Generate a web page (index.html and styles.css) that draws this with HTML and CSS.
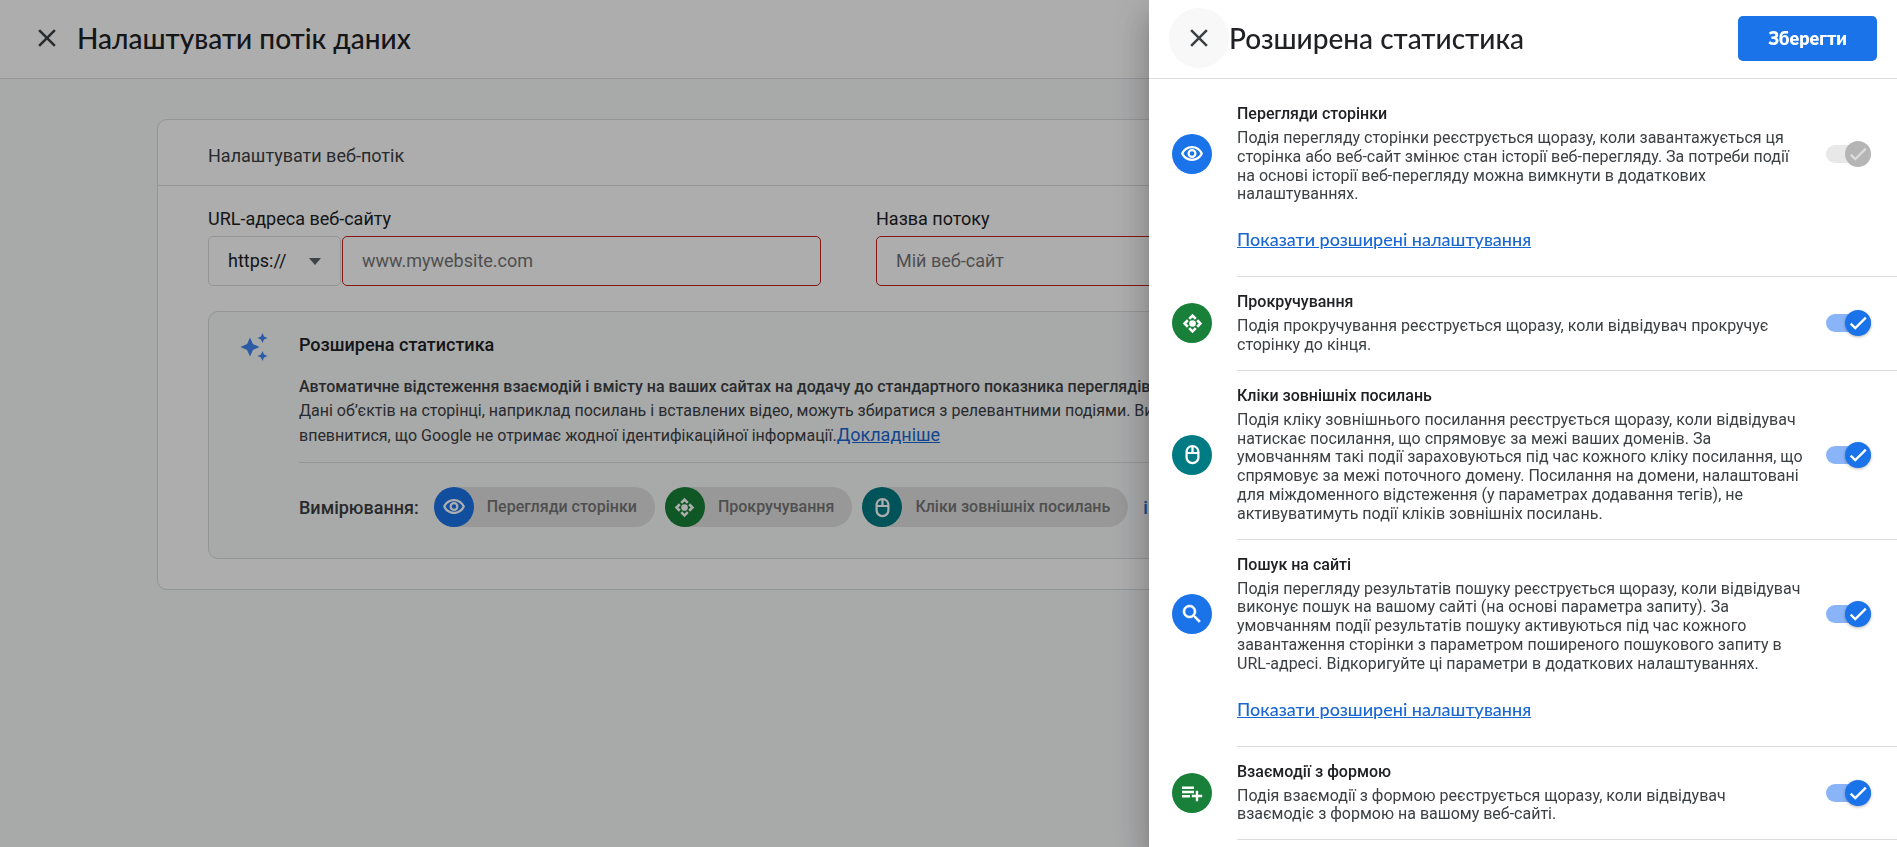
FILE: index.html
```html
<!DOCTYPE html>
<html lang="uk">
<head>
<meta charset="utf-8">
<meta name="viewport" content="width=device-width, initial-scale=1">
<title>Налаштувати потік даних</title>
<link rel="stylesheet" href="styles.css">
</head>
<body>
<svg class="sprite" aria-hidden="true">
  <symbol id="i-close" viewBox="0 0 24 24"><path d="M19 6.41 17.59 5 12 10.59 6.41 5 5 6.41 10.59 12 5 17.59 6.41 19 12 13.41 17.59 19 19 17.59 13.41 12z"/></symbol>
  <symbol id="i-eye" viewBox="0 0 24 24"><path d="M12 6.300c3.600 0 6.900 2 8.500 5.200-1.600 3.200-4.900 5.200-8.500 5.200s-6.900-2-8.500-5.200C5.100 8.300 8.400 6.300 12 6.300M12 4C7 4 2.730 7.110 1 11.500 2.730 15.890 7 19 12 19s9.270-3.110 11-7.500C21.270 7.110 17 4 12 4zm0 5.200a2.300 2.300 0 1 1 0 4.600 2.300 2.300 0 0 1 0-4.600M12 7a4.500 4.500 0 1 0 0 9 4.500 4.500 0 0 0 0-9z"/></symbol>
  <symbol id="i-scroll" viewBox="0 0 24 24"><path d="M12 .8 7.200 5.600l2.100 2.100L12 5l2.700 2.700 2.100-2.100zM12 23.200l4.800-4.800-2.100-2.100L12 19l-2.700-2.700-2.100 2.100zM.8 12l4.800 4.800 2.100-2.100L5 12l2.700-2.700-2.100-2.100zM23.200 12l-4.800-4.800-2.100 2.100L19 12l-2.700 2.700 2.100 2.100z"/><circle cx="12" cy="12" r="3.800"/></symbol>
  <symbol id="i-mouse" viewBox="0 0 24 24"><path d="M20 9c-.04-4.390-3.600-7.930-8-7.930S4.040 4.610 4 9v6c0 4.420 3.580 8 8 8s8-3.580 8-8V9zm-2.500 0h-4.200V3.600c2.400.5 4.160 2.600 4.200 5.400zm-6.800-5.400V9H6.500c.04-2.800 1.800-4.900 4.200-5.400zM17.500 15a5.500 5.500 0 0 1-11 0v-3.600h11z"/></symbol>
  <symbol id="i-search" viewBox="0 0 24 24"><path d="M15.500 14h-.79l-.28-.27C15.410 12.590 16 11.110 16 9.500 16 5.910 13.090 3 9.500 3S3 5.910 3 9.500 5.910 16 9.500 16c1.610 0 3.090-.59 4.230-1.570l.27.28v.79l5 4.990L20.490 19l-4.990-5zm-6 0C7.010 14 5 11.990 5 9.500S7.010 5 9.500 5 14 7.010 14 9.500 11.990 14 9.500 14z" stroke="currentColor" stroke-width=".5"/></symbol>
  <symbol id="i-form" viewBox="0 0 24 24"><path d="M14 9.800H2v2.400h12V9.800zm0-4.200H2V8h12V5.600zm4.200 8.200V9.800h-2.400v4h-4v2.400h4v4h2.400v-4h4v-2.400h-4zM2 16.400h8V14H2v2.400z"/></symbol>
  <symbol id="i-check" viewBox="0 0 24 24"><path d="M9 15.800 4.930 11.700l-1.800 1.800L9 19.400 21.400 7l-1.800-1.800z"/></symbol>
  <symbol id="i-spark" viewBox="0 0 28 28"><path d="M10 4.500l2.900 6.600 6.600 2.900-6.600 2.900L10 23.500l-2.900-6.600L.5 14l6.600-2.900z"/><path d="M22.500 0l1.500 3.500L27.500 5 24 6.500 22.500 10 21 6.500 17.500 5 21 3.500z"/><path d="M22.500 18l1.500 3.500 3.500 1.500-3.500 1.500-1.500 3.500-1.500-3.500-3.500-1.500 3.500-1.500z"/></symbol>
</svg>

<div class="page">
  <header class="topbar">
    <button class="close" type="button" aria-label="Закрити"><svg class="close-icon"><use href="#i-close"/></svg></button>
    <h1 class="heading">Налаштувати потік даних</h1>
  </header>
  <main class="content">
    <section class="card">
      <h2 class="card-title">Налаштувати веб-потік</h2>
      <div class="card-body">
        <div class="fields">
          <div class="field">
            <label class="field-label" for="url">URL-адреса веб-сайту</label>
            <div class="url-row">
              <div class="scheme">
                <select class="scheme-select" aria-label="Протокол"><option>https://</option></select>
                <svg class="scheme-arrow" viewBox="0 0 12 7"><path d="M0 0h12L6 7z"/></svg>
              </div>
              <input class="text-input" id="url" type="text" placeholder="www.mywebsite.com">
            </div>
          </div>
          <div class="field">
            <label class="field-label" for="name">Назва потоку</label>
            <input class="text-input" id="name" type="text" placeholder="Мій веб-сайт">
          </div>
        </div>
        <section class="enhanced">
          <svg class="spark"><use href="#i-spark"/></svg>
          <div class="enhanced-body">
            <h3 class="enhanced-title">Розширена статистика</h3>
            <p class="enhanced-text"><strong class="lead">Автоматичне відстеження взаємодій і вмісту на ваших сайтах на додачу до стандартного показника переглядів сторінок.</strong><br>Дані об’єктів на сторінці, наприклад посилань і вставлених відео, можуть збиратися з релевантними подіями. Ви повинні<br>впевнитися, що Google не отримає жодної ідентифікаційної інформації.<a class="more" href="#">Докладніше</a></p>
            <div class="measure">
              <span class="measure-label">Вимірювання:</span>
              <ul class="chips">
                <li class="chip"><span class="badge blue"><svg class="badge-icon"><use href="#i-eye"/></svg></span><span class="chip-text">Перегляди сторінки</span></li>
                <li class="chip"><span class="badge green"><svg class="badge-icon small"><use href="#i-scroll"/></svg></span><span class="chip-text">Прокручування</span></li>
                <li class="chip"><span class="badge teal"><svg class="badge-icon small"><use href="#i-mouse"/></svg></span><span class="chip-text">Кліки зовнішніх посилань</span></li>
              </ul>
              <a class="others" href="#">і ще 4</a>
            </div>
          </div>
        </section>
      </div>
    </section>
  </main>
</div>

<div class="scrim"></div>

<aside class="panel" role="dialog" aria-labelledby="panel-title">
  <header class="panel-bar">
    <button class="close hovered" type="button" aria-label="Закрити панель"><svg class="close-icon"><use href="#i-close"/></svg></button>
    <h2 class="heading" id="panel-title">Розширена статистика</h2>
    <button class="save" type="button">Зберегти</button>
  </header>
  <ul class="events">
    <li class="event">
      <div class="event-row">
        <span class="badge blue"><svg class="badge-icon"><use href="#i-eye"/></svg></span>
        <div class="event-text">
          <label class="event-title" for="t1">Перегляди сторінки</label>
          <p class="event-desc">Подія перегляду сторінки реєструється щоразу, коли завантажується ця<br>сторінка або веб-сайт змінює стан історії веб-перегляду. За потреби події<br>на основі історії веб-перегляду можна вимкнути в додаткових<br>налаштуваннях.</p>
        </div>
        <span class="toggle"><input class="toggle-input" id="t1" type="checkbox" checked disabled><span class="thumb"><svg class="tick"><use href="#i-check"/></svg></span></span>
      </div>
      <a class="advanced" href="#">Показати розширені налаштування</a>
    </li>
    <li class="event">
      <div class="event-row">
        <span class="badge green"><svg class="badge-icon small"><use href="#i-scroll"/></svg></span>
        <div class="event-text">
          <label class="event-title" for="t2">Прокручування</label>
          <p class="event-desc">Подія прокручування реєструється щоразу, коли відвідувач прокручує<br>сторінку до кінця.</p>
        </div>
        <span class="toggle"><input class="toggle-input" id="t2" type="checkbox" checked><span class="thumb"><svg class="tick"><use href="#i-check"/></svg></span></span>
      </div>
    </li>
    <li class="event">
      <div class="event-row">
        <span class="badge teal"><svg class="badge-icon small"><use href="#i-mouse"/></svg></span>
        <div class="event-text">
          <label class="event-title" for="t3">Кліки зовнішніх посилань</label>
          <p class="event-desc">Подія кліку зовнішнього посилання реєструється щоразу, коли відвідувач<br>натискає посилання, що спрямовує за межі ваших доменів. За<br>умовчанням такі події зараховуються під час кожного кліку посилання, що<br>спрямовує за межі поточного домену. Посилання на домени, налаштовані<br>для міждоменного відстеження (у параметрах додавання тегів), не<br>активуватимуть події кліків зовнішніх посилань.</p>
        </div>
        <span class="toggle"><input class="toggle-input" id="t3" type="checkbox" checked><span class="thumb"><svg class="tick"><use href="#i-check"/></svg></span></span>
      </div>
    </li>
    <li class="event">
      <div class="event-row">
        <span class="badge blue"><svg class="badge-icon"><use href="#i-search"/></svg></span>
        <div class="event-text">
          <label class="event-title" for="t4">Пошук на сайті</label>
          <p class="event-desc">Подія перегляду результатів пошуку реєструється щоразу, коли відвідувач<br>виконує пошук на вашому сайті (на основі параметра запиту). За<br>умовчанням події результатів пошуку активуються під час кожного<br>завантаження сторінки з параметром поширеного пошукового запиту в<br>URL-адресі. Відкоригуйте ці параметри в додаткових налаштуваннях.</p>
        </div>
        <span class="toggle"><input class="toggle-input" id="t4" type="checkbox" checked><span class="thumb"><svg class="tick"><use href="#i-check"/></svg></span></span>
      </div>
      <a class="advanced" href="#">Показати розширені налаштування</a>
    </li>
    <li class="event">
      <div class="event-row">
        <span class="badge green"><svg class="badge-icon"><use href="#i-form"/></svg></span>
        <div class="event-text">
          <label class="event-title" for="t5">Взаємодії з формою</label>
          <p class="event-desc">Подія взаємодії з формою реєструється щоразу, коли відвідувач<br>взаємодіє з формою на вашому веб-сайті.</p>
        </div>
        <span class="toggle"><input class="toggle-input" id="t5" type="checkbox" checked><span class="thumb"><svg class="tick"><use href="#i-check"/></svg></span></span>
      </div>
    </li>
  </ul>
</aside>
</body>
</html>
```

FILE: styles.css
```css
* { box-sizing: border-box; }
body {
  margin: 0;
  background: #f8f9fa;
  color: #202124;
  font-family: Roboto, "Liberation Sans", sans-serif;
  font-size: 18px;
  overflow: hidden;
}
h1, h2, h3, p, ul { margin: 0; padding: 0; }
ul { list-style: none; }
button, input, select { font: inherit; color: inherit; }
svg { display: block; fill: currentColor; }
.sprite { position: absolute; width: 0; height: 0; }

.page { min-height: 100vh; }
.topbar {
  display: flex;
  align-items: center;
  height: 79px;
  padding: 0 0 2px 17px;
  background: #fff;
  border-bottom: 1px solid #dadce0;
}
.close {
  flex: none;
  display: flex;
  align-items: center;
  justify-content: center;
  width: 60px;
  height: 60px;
  padding: 0;
  border: 0;
  border-radius: 50%;
  background: none;
  color: #3c4043;
}
.close.hovered { background: #f8f8f8; }
.close-icon { width: 30px; height: 30px; }
.heading {
  font-family: Lato, Roboto, sans-serif;
  font-size: 28px;
  font-weight: 500;
  line-height: 36px;
  white-space: nowrap;
}

.content { padding: 40px 157px; }
.card {
  background: #fff;
  border: 1px solid #dadce0;
  border-radius: 10px;
}
.card-title {
  padding: 24px 50px 17px;
  border-bottom: 1px solid #dadce0;
  font-size: 18px;
  font-weight: 400;
  line-height: 24px;
  color: #3c4043;
}
.card-body { padding: 21px 50px 30px; }
.fields {
  display: grid;
  grid-template-columns: 1fr 1fr;
  gap: 55px;
  padding-right: 200px;
}
.field { display: flex; flex-direction: column; }
.field-label { line-height: 24px; padding-bottom: 5px; }
.url-row { display: flex; gap: 1px; }
.scheme { position: relative; flex: none; width: 133px; }
.scheme-select {
  appearance: none;
  width: 100%;
  height: 50px;
  padding: 0 19px 2px;
  border: 1px solid #dadce0;
  border-radius: 5px;
  background: #fff;
}
.scheme-arrow {
  position: absolute;
  right: 20px;
  top: 22px;
  width: 12px;
  height: 7px;
  color: #5f6368;
  pointer-events: none;
}
.text-input {
  flex: auto;
  min-width: 0;
  height: 50px;
  padding: 0 19px 2px;
  border: 1px solid #c5221f;
  border-radius: 5px;
  background: #fff;
}
.field > .text-input { flex: none; }
.text-input::placeholder { color: #757575; opacity: 1; }

.enhanced {
  display: flex;
  gap: 31px;
  margin-top: 25px;
  padding: 21px 50px 30px 31px;
  background: #f8f9fa;
  border: 1px solid #dadce0;
  border-radius: 10px;
}
.spark { flex: none; width: 28px; height: 28px; color: #4285f4; }
.enhanced-body { flex: 1; min-width: 0; }
.enhanced-title { font-size: 18px; font-weight: 500; line-height: 24px; }
.enhanced-text {
  padding: 18px 0 14px;
  border-bottom: 1px solid #dadce0;
  font-size: 16px;
  line-height: 24px;
  color: #3c4043;
  white-space: nowrap;
}
.lead { font-weight: 500; }
.more { font-size: 18px; color: #1967d2; }
.measure { display: flex; align-items: center; gap: 15px; padding-top: 24px; padding-bottom: 1px; white-space: nowrap; }
.measure-label { font-weight: 500; color: #3c4043; }
.chips { display: flex; gap: 10px; }
.chip {
  display: flex;
  align-items: center;
  gap: 13px;
  padding-right: 18px;
  border-radius: 20px;
  background: #e0e0e0;
}
.chip-text { padding-bottom: 2px; font-size: 16px; font-weight: 500; color: #757575; }
.others { font-weight: 500; color: #1967d2; text-decoration: none; }

.badge {
  flex: none;
  display: flex;
  align-items: center;
  justify-content: center;
  width: 40px;
  height: 40px;
  border-radius: 50%;
  color: #fff;
}
.badge-icon { width: 24px; height: 24px; }
.badge-icon.small { width: 21px; height: 21px; }
.blue { background: #1a73e8; }
.green { background: #188038; }
.teal { background: #007b83; }

.scrim { position: fixed; inset: 0; background: rgba(0, 0, 0, 0.32); }
.panel {
  position: fixed;
  top: 0;
  right: 0;
  bottom: 0;
  width: 748px;
  overflow: hidden;
  background: #fff;
  box-shadow: 0 10px 12px -6px rgba(0, 0, 0, 0.2), 0 20px 30px 2px rgba(0, 0, 0, 0.14), 0 8px 38px 7px rgba(0, 0, 0, 0.12);
}
.panel-bar {
  display: flex;
  align-items: center;
  height: 79px;
  padding: 0 20px 2px;
  border-bottom: 1px solid #dadce0;
}
.save {
  height: 45px;
  margin-left: auto;
  padding: 0 30px;
  border: 0;
  border-radius: 5px;
  background: #1a73e8;
  color: #fff;
  font-family: Lato, Roboto, sans-serif;
  font-weight: 800;
}
.events { padding-top: 10px; }
.event::after {
  content: "";
  display: block;
  height: 1px;
  margin-left: 88px;
  background: #dadce0;
}
.event-row { display: flex; align-items: center; padding: 0 26px 0 23px; }
.event-text { flex: 1; padding: 15px 0 15px 25px; font-size: 16px; line-height: 1.175; }
.event-title { display: block; padding-bottom: 6px; font-weight: 500; line-height: 19px; }
.event-desc { color: #3c4043; }
.advanced {
  display: inline-block;
  margin: 9px 0 26px 88px;
  font-family: Lato, Roboto, sans-serif;
  font-weight: 500;
  line-height: 22px;
  color: #1967d2;
  vertical-align: top;
}

.toggle { position: relative; flex: none; width: 45px; height: 18px; }
.toggle-input {
  display: block;
  appearance: none;
  width: 100%;
  height: 100%;
  margin: 0;
  border-radius: 9px;
  background: #8ab4f8;
}
.thumb {
  position: absolute;
  right: 0;
  top: -4px;
  display: flex;
  align-items: center;
  justify-content: center;
  width: 26px;
  height: 26px;
  border-radius: 50%;
  background: #1a73e8;
  color: #fff;
  box-shadow: 0 1px 3px rgba(0, 0, 0, 0.3);
  pointer-events: none;
}
.tick { width: 22px; height: 22px; }
.toggle-input:disabled { background: #e8e8e8; }
.toggle-input:disabled + .thumb { background: #b5b5b5; color: #dcdcdc; box-shadow: none; }
```
